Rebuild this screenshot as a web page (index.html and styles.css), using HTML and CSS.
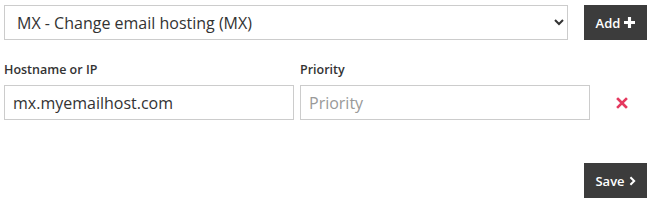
FILE: index.html
```html
<!DOCTYPE html>
<html lang="en">
<head>
  <meta charset="UTF-8">
  <title>DNS records</title>
  <link rel="stylesheet" href="styles.css">
</head>
<body>

  <div class="record-form">
    <div class="add-row">
      <select class="record-type">
        <option>MX - Change email hosting (MX)</option>
        <option>A - Point to an IP address (A)</option>
        <option>CNAME - Alias (CNAME)</option>
        <option>TXT - Text record (TXT)</option>
      </select>
      <button class="dark-button add-button">Add
        <svg class="btn-icon" viewBox="0 0 12 12" width="11" height="11"><path d="M4.3 0h3.4v4.3H12v3.4H7.7V12H4.3V7.7H0V4.3h4.3z" fill="#fff"/></svg>
      </button>
    </div>

    <div class="record-row">
      <div class="field">
        <label for="hostname">Hostname or IP</label>
        <input id="hostname" type="text" value="mx.myemailhost.com">
      </div>
      <div class="field">
        <label for="priority">Priority</label>
        <input id="priority" type="text" placeholder="Priority">
      </div>
      <div class="remove-cell">
        <button class="remove-button" title="Remove">
          <svg viewBox="0 0 12 12" width="12" height="12"><path d="M2 2l8 8M10 2l-8 8" stroke="#e5395f" stroke-width="2.6" stroke-linecap="square"/></svg>
        </button>
      </div>
    </div>

    <div class="save-row">
      <button class="dark-button save-button">Save
        <svg class="btn-icon" viewBox="0 0 8 12" width="7" height="10"><path d="M1.5 1.5L6 6l-4.5 4.5" stroke="#fff" stroke-width="2.4" fill="none"/></svg>
      </button>
    </div>
  </div>

</body>
</html>
```

FILE: styles.css
```css
* {
  margin: 0;
  padding: 0;
  box-sizing: border-box;
}

body {
  font-family: 'Open Sans', 'Liberation Sans', sans-serif;
  color: #333;
  background-color: #fff;
  padding: 5px 8px 0 4px;
}

.add-row {
  display: flex;
  gap: 16px;
  align-items: stretch;
}

.record-type {
  flex: 1;
  height: 35px;
  padding: 0 8px;
  font-family: inherit;
  font-size: 16px;
  color: #333;
  background-color: #fff;
  border: 1px solid #ccc;
  border-radius: 0;
  outline: none;
}

.dark-button {
  display: flex;
  align-items: center;
  justify-content: center;
  gap: 4px;
  width: 63px;
  height: 35px;
  background-color: #3c3c3c;
  color: #fff;
  border: none;
  font-family: inherit;
  font-weight: 600;
  font-size: 13px;
  cursor: pointer;
}

.dark-button:hover {
  background-color: #222;
}

.record-row {
  display: flex;
  gap: 6px;
  margin-top: 21px;
  align-items: flex-end;
}

.field {
  flex: 1;
  display: flex;
  flex-direction: column;
}

.field label {
  font-size: 12.5px;
  font-weight: 600;
  color: #333;
  line-height: 18px;
  margin-bottom: 6px;
}

.field input {
  height: 35px;
  padding: 0 8px;
  font-family: inherit;
  font-size: 16px;
  color: #333;
  border: 1px solid #ccc;
  outline: none;
}

.field input::placeholder {
  color: #999;
}

.field input:focus {
  border-color: #888;
}

.remove-cell {
  width: 51px;
  height: 35px;
  display: flex;
  align-items: center;
  justify-content: center;
}

.remove-button {
  background: none;
  border: none;
  cursor: pointer;
  display: flex;
  padding: 2px;
}

.save-row {
  display: flex;
  justify-content: flex-end;
  margin-top: 43px;
}
```
